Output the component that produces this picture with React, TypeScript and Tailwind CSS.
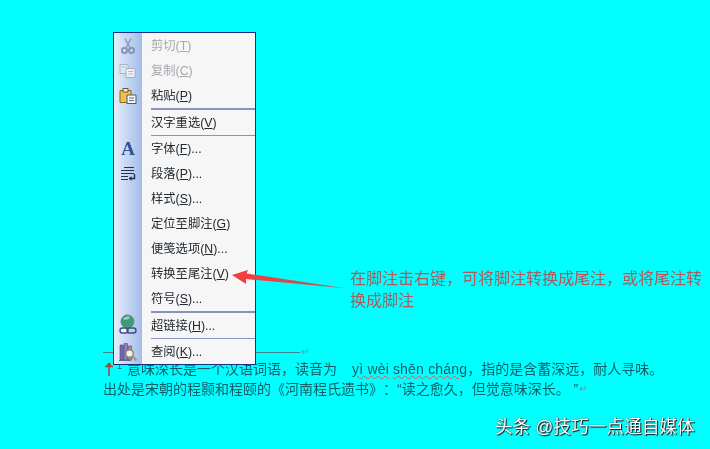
import React from 'react';

type Row =
  | { sep: number }
  | { label: string; key: string; tail?: string; off?: boolean; icon?: React.ReactNode };

const CutIcon = () => (
  <svg width="18" height="18" viewBox="0 0 18 18" fill="none">
    <path d="M6 1.5 L11 11 M12 1.5 L7 11" stroke="#8d9db4" strokeWidth="1.6" />
    <circle cx="5.5" cy="13.5" r="2.6" stroke="#7f92ad" strokeWidth="1.7" />
    <circle cx="12.5" cy="13.5" r="2.6" stroke="#7f92ad" strokeWidth="1.7" />
  </svg>
);

const CopyIcon = () => (
  <svg width="20" height="18" viewBox="0 0 20 18" fill="none">
    <path d="M2 2.5h8v9H2z" fill="#dfe6f0" stroke="#a9b6c8" />
    <path d="M8 6.5h9v9H8z" fill="#eef1f6" stroke="#a3b0c4" />
    <path d="M10 9.5h5M10 12h5M4 5h4" stroke="#b3bdcc" />
  </svg>
);

const PasteIcon = () => (
  <svg width="20" height="18" viewBox="0 0 20 18" fill="none">
    <path d="M2 3.5h11v12H2z" fill="#efc04a" stroke="#8b6a20" />
    <path d="M5 1.5h5v3.5H5z" fill="#f6efcf" stroke="#5f5a45" />
    <path d="M9 8h9v8.5H9z" fill="#f4f6fa" stroke="#46597c" />
    <path d="M11 11h5M11 13.5h5" stroke="#5a6c90" />
  </svg>
);

const ParaIcon = () => (
  <svg width="18" height="16" viewBox="0 0 18 16" fill="none">
    <path d="M5 1.5h10M2 4.5h13M2 7.5h13M2 10.5h7M2 13.5h7" stroke="#25314f" strokeWidth="1.2" />
    <path d="M15.5 8v4.5H11" stroke="#25314f" strokeWidth="1.4" />
    <path d="M12.5 10v5L9.5 12.5z" fill="#25314f" />
  </svg>
);

const LinkIcon = () => (
  <svg width="20" height="22" viewBox="0 0 20 22" fill="none" className="-mt-[2px]">
    <circle cx="9.5" cy="7.5" r="6.5" fill="#3f9a78" />
    <path d="M5 5c2-2.5 5-3 7-2-1 2-4 4-7 2z" fill="#9fd3c0" />
    <circle cx="9.5" cy="7.5" r="6.5" stroke="#4d7f78" strokeWidth="0.8" />
    <rect x="2" y="14" width="8" height="5" rx="2.5" fill="#f1f4fa" stroke="#3e4f80" strokeWidth="1.4" />
    <rect x="9" y="14" width="9" height="5" rx="2.5" stroke="#3e4f80" strokeWidth="1.4" />
  </svg>
);

const ResearchIcon = () => (
  <svg width="22" height="22" viewBox="0 0 22 22" fill="none">
    <path d="M3 4h3.5v15H3z" fill="#6f6ab0" stroke="#4a4888" strokeWidth="0.6" />
    <path d="M7 2.5h3.5V19H7z" fill="#8d82c2" stroke="#4a4888" strokeWidth="0.6" />
    <path d="M11 5h3.5v14H11z" fill="#a684a8" stroke="#4a4888" strokeWidth="0.6" />
    <circle cx="12.5" cy="12.5" r="3.8" fill="#f4f4ea" stroke="#8d8650" strokeWidth="1.4" />
    <path d="M15.5 15.5l4 4" stroke="#a59a4f" strokeWidth="2.2" />
    <path d="M2 19.5h12" stroke="#5f6a8f" />
  </svg>
);

const rows: Row[] = [
  { label: '剪切', key: 'T', off: true, icon: <CutIcon /> },
  { label: '复制', key: 'C', off: true, icon: <CopyIcon /> },
  { label: '粘贴', key: 'P', icon: <PasteIcon /> },
  { sep: 2 },
  { label: '汉字重选', key: 'V' },
  { sep: 1 },
  {
    label: '字体',
    key: 'F',
    tail: '...',
    icon: <span className="text-[19px] leading-none font-bold text-[#2f5590] font-['Liberation_Serif',serif]">A</span>,
  },
  { label: '段落', key: 'P', tail: '...', icon: <ParaIcon /> },
  { label: '样式', key: 'S', tail: '...' },
  { label: '定位至脚注', key: 'G' },
  { label: '便笺选项', key: 'N', tail: '...' },
  { label: '转换至尾注', key: 'V' },
  { label: '符号', key: 'S', tail: '...' },
  { sep: 2 },
  { label: '超链接', key: 'H', tail: '...', icon: <LinkIcon /> },
  { sep: 1 },
  { label: '查阅', key: 'K', tail: '...', icon: <ResearchIcon /> },
];

const ContextMenu = () => (
  <div className="absolute left-[113px] top-[32px] w-[143px] border border-[#1c2f86] bg-[#f6f6f6]">
    <div className="relative">
      <div className="absolute inset-y-0 left-0 w-[28px] bg-gradient-to-r from-[#e6eefb] to-[#a3bde8]" />
      {rows.map((row, i) =>
        'sep' in row ? (
          <div key={i} className="relative flex" style={{ height: row.sep }}>
            <div className="ml-[37px] flex-1 bg-[#8793bd]" />
          </div>
        ) : (
          <div key={i} className="relative flex h-[25px] items-center">
            <div className="flex w-[28px] shrink-0 items-center justify-center">{row.icon}</div>
            <div
              className={`ml-[9px] whitespace-nowrap pt-px text-[12.3px] leading-none ${
                row.off ? 'text-[#a3a8ad]' : 'text-[#222a30]'
              }`}
            >
              {row.label}(<span className="underline">{row.key}</span>){row.tail}
            </div>
          </div>
        ),
      )}
    </div>
  </div>
);

const App: React.FC = () => {
  return (
    <div className="relative h-[449px] w-[710px] overflow-hidden bg-[#00ffff] blur-[0.35px] [text-spacing-trim:space-all] font-['Liberation_Sans','Noto_Sans_CJK_SC',sans-serif]">
      {/* footnote text under the menu */}
      <div className="pl-[103px] pt-[351px]">
        <div className="flex h-[2px] w-[206px] items-center">
          <div className="h-px flex-1 bg-[#3f8494]" />
          <span className="-mt-px ml-px text-[10px] leading-none text-[#5a93a8]">↵</span>
        </div>
        <div className="mt-[5px] flex h-[21px] items-center whitespace-nowrap text-[14px] leading-none text-[#0f5f68]">
          <svg width="11" height="16" viewBox="0 0 11 16" fill="none" className="ml-px">
            <path d="M5 2v13M1 5.5c2-.3 6-.3 8 0M5 2L3 5M5 2l2 3" stroke="#a04a3a" strokeWidth="1.5" />
          </svg>
          <span className="ml-[2px]">
            <span className="mr-[5px] align-top text-[9px]">1</span>意味深长是一个汉语词语，读音为
            <span className="ml-[15px] tracking-[0.2px] underline decoration-wavy decoration-[#c56a4a] decoration-1">yì wèi</span>{' '}
            <span className="tracking-[0.2px] underline decoration-wavy decoration-[#c56a4a] decoration-1">shēn cháng</span>
            ，指的是含蓄深远，耐人寻味。
          </span>
        </div>
        <div className="flex h-[20px] items-center whitespace-nowrap text-[14px] leading-none text-[#0f5f68]">
          出处是宋朝的程颢和程颐的《河南程氏遗书》：“读之愈久，但觉意味深长。 ”
          <span className="ml-px text-[10px] text-[#5a93a8]">↵</span>
        </div>
      </div>

      <ContextMenu />

      {/* red callout arrow */}
      <svg className="absolute left-[225px] top-[262px]" width="130" height="32" viewBox="0 0 130 32">
        <defs>
          <linearGradient id="tail" x1="0" x2="1" y1="0" y2="0">
            <stop offset="0.3" stopColor="#f03f3f" />
            <stop offset="1" stopColor="#a06a6a" />
          </linearGradient>
        </defs>
        <path d="M7 13 L23 8 L21.5 11.5 L122 26.5 L21 17 L21 22 Z" fill="url(#tail)" />
      </svg>

      <div className="absolute left-[350px] top-[268px] w-[354px] text-[16px] leading-[22px] text-[#a85c5c]">
        在脚注击右键，可将脚注转换成尾注，或将尾注转换成脚注
      </div>

      <div className="absolute left-[495px] top-[416px] whitespace-nowrap text-[17.7px] leading-[22px] text-white [text-shadow:1px_1px_1px_#111,0_0_1px_#222]">
        头条 @技巧一点通自媒体
      </div>
    </div>
  );
};

export default App;
